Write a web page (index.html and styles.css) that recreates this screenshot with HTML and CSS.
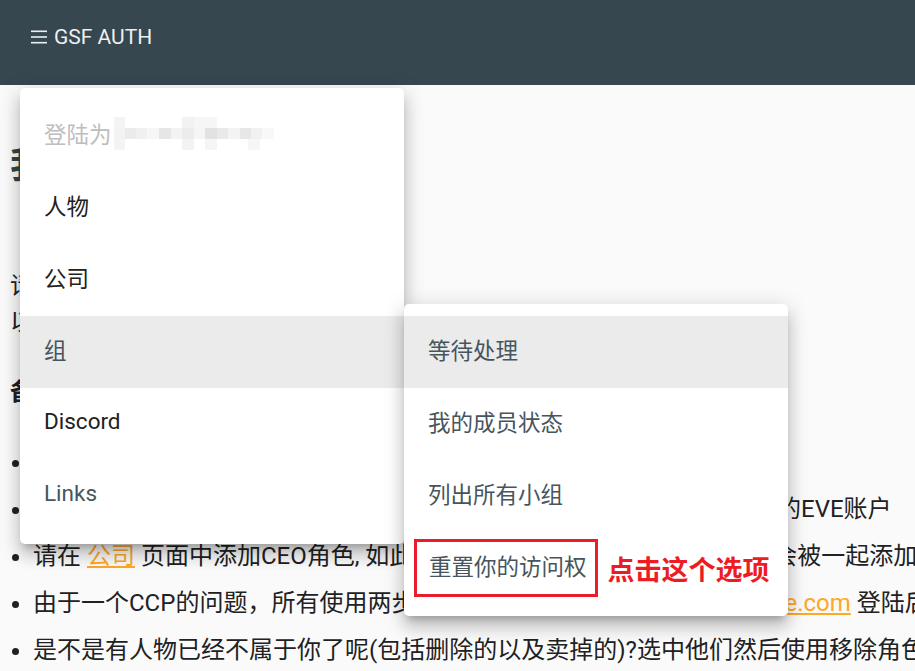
FILE: index.html
```html
<!DOCTYPE html>
<html lang="zh">
<head>
    <meta charset="UTF-8">
    <title>GSF AUTH</title>
    <link rel="stylesheet" href="styles.css">
</head>
<body>
    <header class="topbar">
        <svg class="burger" width="16" height="14" viewBox="0 0 16 14">
            <rect x="0" y="0.5" width="16" height="1.6" fill="#eceff1"/>
            <rect x="0" y="6.2" width="16" height="1.6" fill="#eceff1"/>
            <rect x="0" y="11.9" width="16" height="1.6" fill="#eceff1"/>
        </svg>
        <span class="brand">GSF AUTH</span>
    </header>

    <main class="content">
        <h1>我的账户</h1>
        <p>请在这里添加并管理你的人物，<br>以便我们能够正确地为你分配权限。</p>
        <p class="note">备注：</p>
        <ul>
            <li>请添加你所有的人物</li>
            <li>如果你有多个人物，请在人物页面中添加，所有人物都应属于同一个玩的EVE账户</li>
            <li>请在 <a href="#">公司</a> 页面中添加CEO角色, 如此你公司中其他成员的所有人物也都会被一起添加到系统中</li>
            <li>由于一个CCP的问题，所有使用两步验证的人物需要先在 <a href="#">login.eveonline.com</a> 登陆后再添加</li>
            <li>是不是有人物已经不属于你了呢(包括删除的以及卖掉的)?选中他们然后使用移除角色按钮</li>
        </ul>
    </main>

    <div class="menu main-menu">
        <div class="item muted">登陆为<span class="blur"></span></div>
        <div class="item">人物</div>
        <div class="item">公司</div>
        <div class="item soft active">组</div>
        <div class="item">Discord</div>
        <div class="item soft">Links</div>
    </div>

    <div class="menu sub-menu">
        <div class="item soft active">等待处理</div>
        <div class="item soft">我的成员状态</div>
        <div class="item soft">列出所有小组</div>
        <div class="item soft marked">
            <span class="boxed">重置你的访问权</span>
            <span class="callout">点击这个选项</span>
        </div>
    </div>
</body>
</html>
```

FILE: styles.css
```css
html, body {
    overflow-x: hidden;
}
body {
    margin: 0;
    background: #fafafa;
    color: #212121;
    font-family: Roboto, "Noto Sans CJK SC", sans-serif;
    font-size: 24px;
}
.topbar {
    height: 85px;
    box-sizing: border-box;
    background: #37474f;
    color: #eceff1;
    padding: 22px 0 0 31px;
    display: flex;
    align-items: flex-start;
    line-height: 30px;
    font-size: 21px;
}
.burger {
    margin: 8px 7px 0 0;
}
.content {
    padding: 0 10px;
}
h1 {
    margin: 60px 0 0;
    font-size: 36px;
    line-height: 43px;
    color: #2d4944;
}
p {
    margin: 80px 0 0;
    line-height: 36px;
}
.note {
    margin-top: 34px;
    font-weight: bold;
}
ul {
    margin: 34px 0 0;
    padding-left: 23px;
}
li {
    line-height: 36px;
    margin-bottom: 11px;
    white-space: nowrap;
}
a {
    color: #ffa726;
}

.menu {
    position: absolute;
    width: 384px;
    padding: 12px 0;
    background: #fff;
    border-radius: 5px;
    box-shadow: 0 7px 7px -4px rgba(0, 0, 0, 0.2), 0 12px 15px 1px rgba(0, 0, 0, 0.14), 0 4px 21px 3px rgba(0, 0, 0, 0.12);
}
.main-menu {
    left: 20px;
    top: 88px;
}
.sub-menu {
    left: 404px;
    top: 304px;
}
.item {
    height: 72px;
    box-sizing: border-box;
    padding: 0 24px 6px;
    display: flex;
    align-items: center;
    font-size: 22.5px;
    color: #212121;
    white-space: nowrap;
}
.item.soft {
    color: #46555d;
}
.item.muted {
    color: #bdbdbd;
}
.item.active {
    background: #ebebeb;
}
.blur {
    display: inline-block;
    width: 160px;
    height: 33px;
    margin-left: 2px;
    background:
        linear-gradient(to right, #f3f3f3 0 11px, #ebebeb 11px 22px, #f0f0f0 22px 33px, #f6f6f6 33px 45px, #e6e6e6 45px 57px, #f3f3f3 57px 68px, #ececec 68px 80px, #f5f5f5 80px 91px, #e2e2e2 91px 103px, #e9e9e9 103px 114px, #f3f3f3 114px 126px, #e7e7e7 126px 137px, #f1f1f1 137px 148px, #f8f8f8 148px 160px) 0 11px / 100% 11px no-repeat,
        linear-gradient(to right, #f4f4f4 0 11px, transparent 11px 68px, #f2f2f2 68px 80px, #f6f6f6 80px 103px, transparent 103px) 0 0 / 100% 11px no-repeat,
        linear-gradient(to right, #f4f4f4 0 11px, transparent 11px 68px, #f3f3f3 68px 80px, transparent 80px 91px, #f5f5f5 91px 103px, transparent 103px 134px, #f6f6f6 134px 146px, transparent 146px) 0 22px / 100% 11px no-repeat;
}
.item.marked {
    padding: 0 0 0 10px;
}
.boxed {
    flex-shrink: 0;
    height: 58px;
    box-sizing: border-box;
    border: 3px solid #e81c2a;
    padding: 0 8px 6px 12px;
    display: flex;
    align-items: center;
}
.callout {
    flex-shrink: 0;
    margin-left: 10px;
    font-size: 27px;
    font-weight: bold;
    color: #ed1c24;
}
```
